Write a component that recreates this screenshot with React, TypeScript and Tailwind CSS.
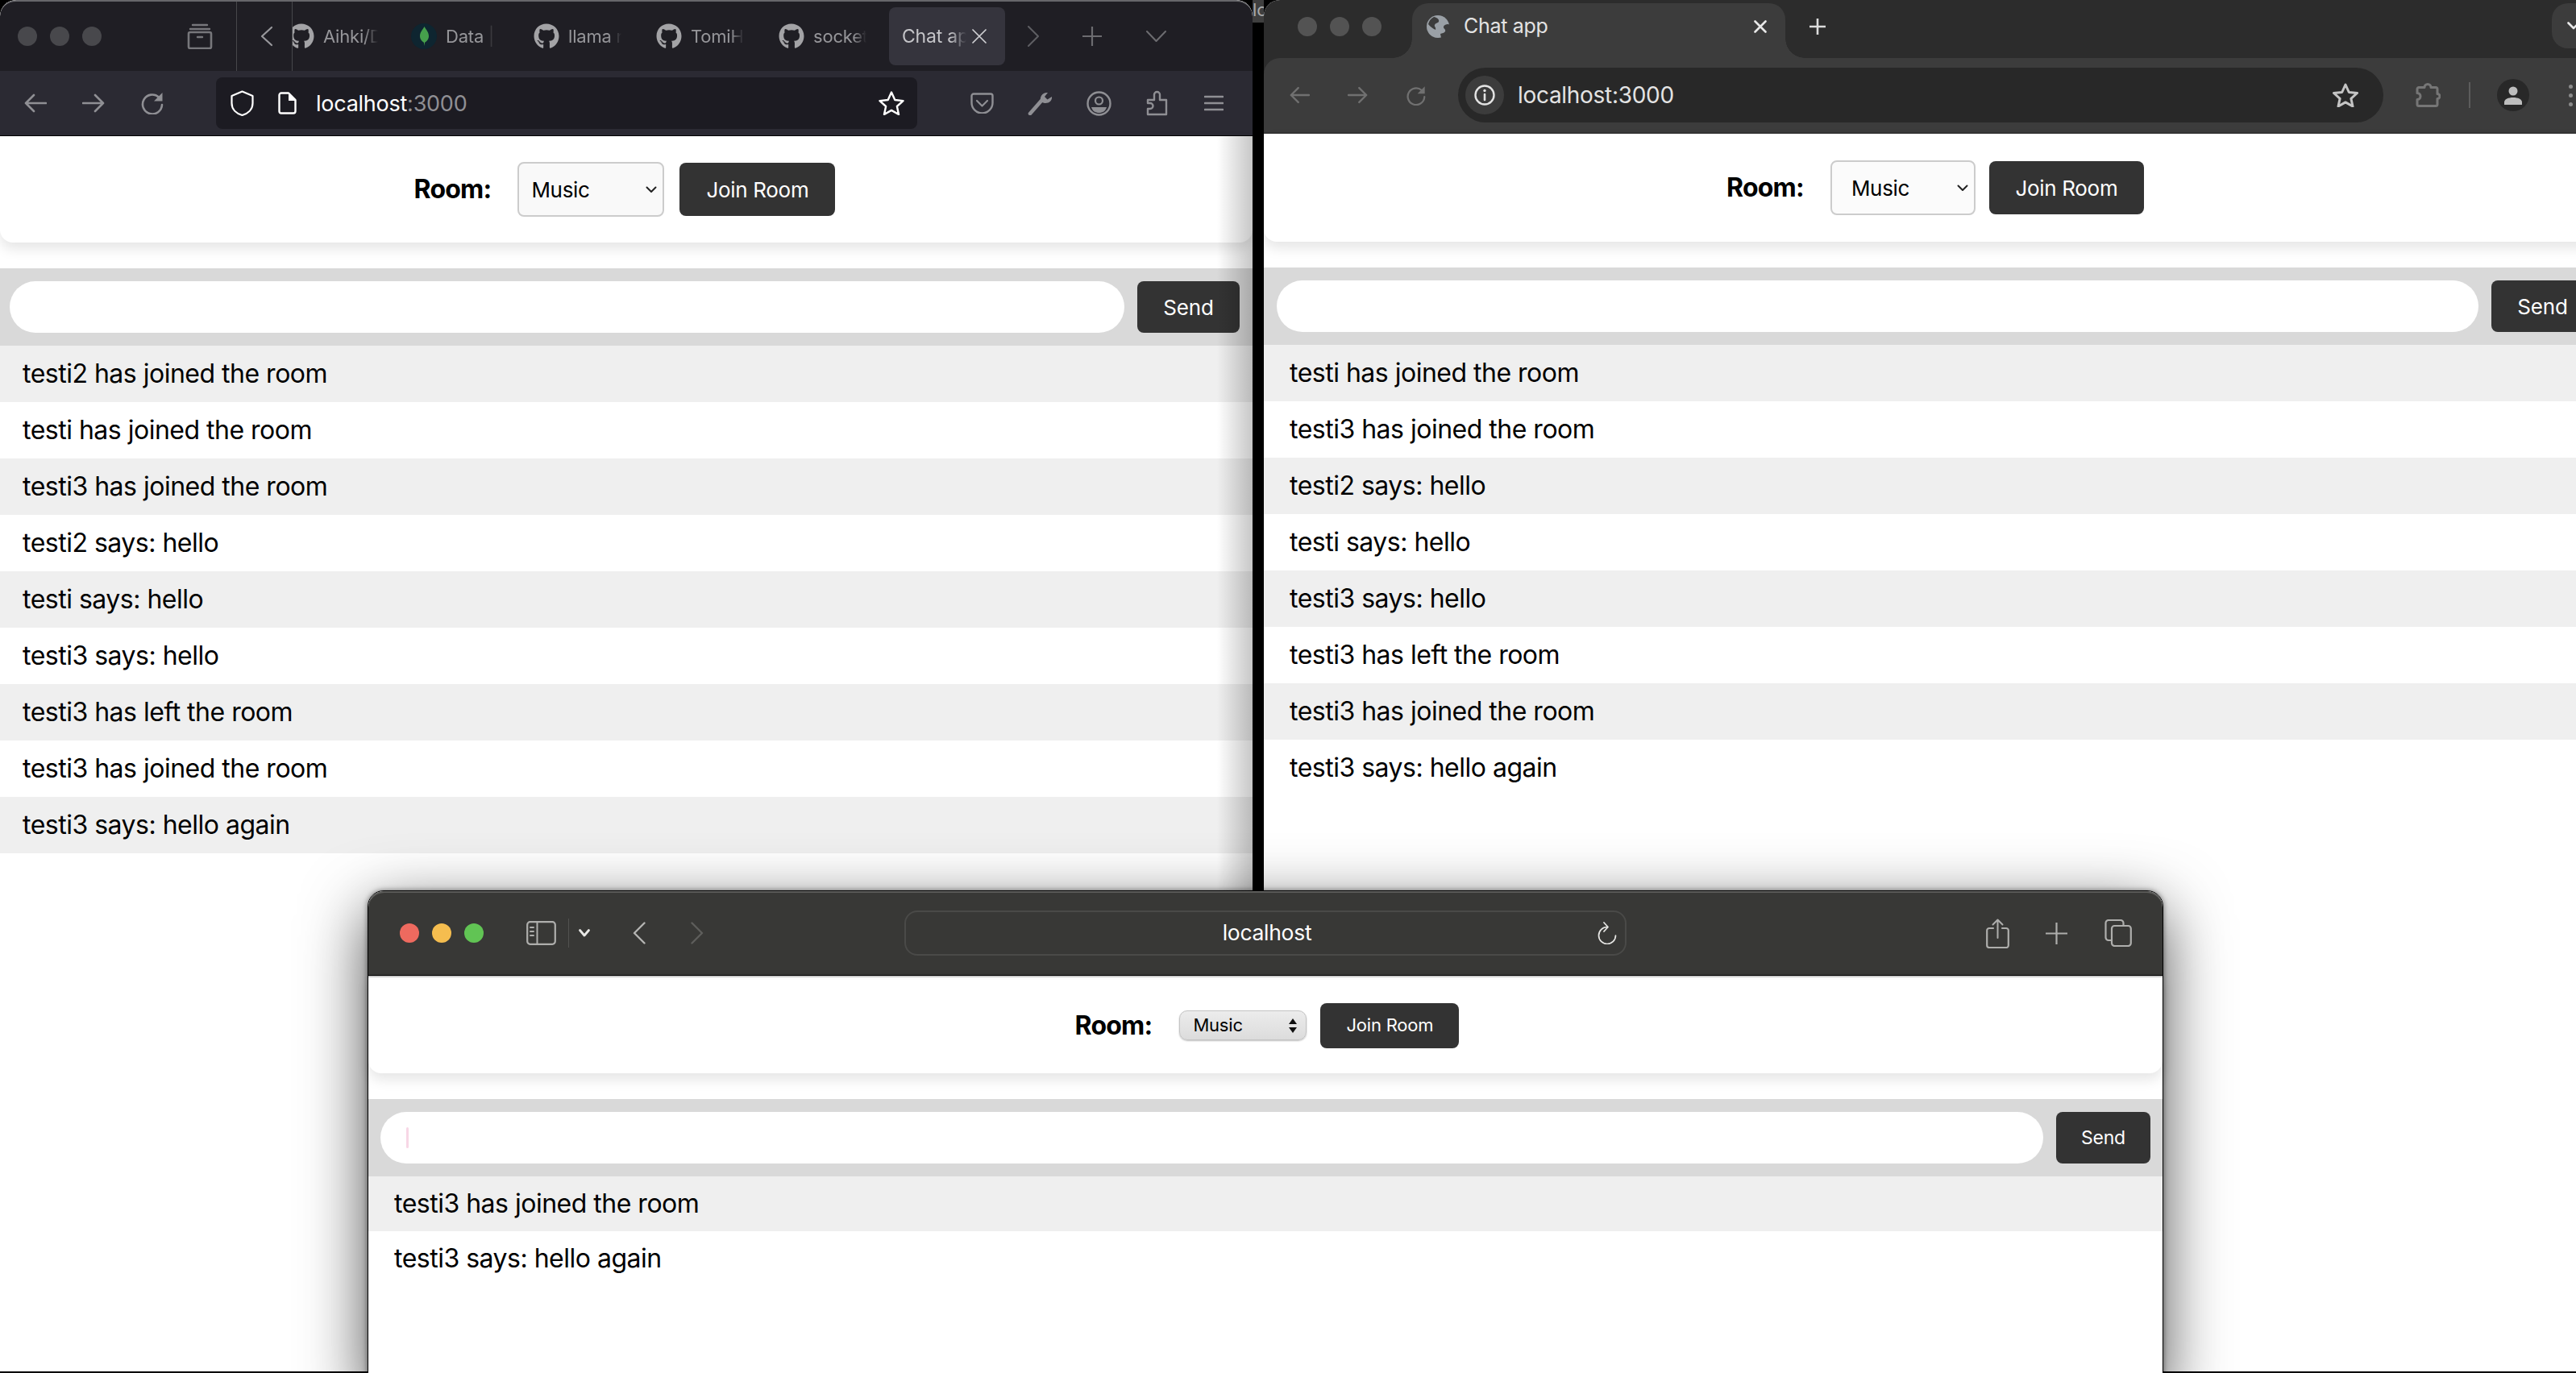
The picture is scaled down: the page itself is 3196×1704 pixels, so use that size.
import React from "react";
import { FaGithub } from "react-icons/fa";

const FONT = "[font-family:Inter,'Liberation_Sans',sans-serif]";

type SvgProps = { w: number; h: number; vw?: number; vh?: number; className?: string; children: React.ReactNode };
function Svg({ w, h, vw, vh, className, children }: SvgProps) {
  return (
    <svg width={w} height={h} viewBox={`0 0 ${vw ?? w} ${vh ?? h}`} fill="none" strokeLinecap="round" strokeLinejoin="round" className={`shrink-0 ${className ?? ""}`}>
      {children}
    </svg>
  );
}

function Dots({ color, gap }: { color: [string, string, string]; gap: string }) {
  return (
    <div className={`flex shrink-0 ${gap}`}>
      <span className={`h-6 w-6 rounded-full ${color[0]}`} />
      <span className={`h-6 w-6 rounded-full ${color[1]}`} />
      <span className={`h-6 w-6 rounded-full ${color[2]}`} />
    </div>
  );
}

function ArrowLeft({ w, h, color, sw = 2.6 }: { w: number; h: number; color: string; sw?: number }) {
  return (
    <Svg w={w} h={h} vw={28} vh={24}>
      <path d="M27 12H2M12 2 2 12l10 10" stroke={color} strokeWidth={sw} />
    </Svg>
  );
}
function ArrowRight({ w, h, color, sw = 2.6 }: { w: number; h: number; color: string; sw?: number }) {
  return (
    <Svg w={w} h={h} vw={28} vh={24}>
      <path d="M1 12h25M16 2l10 10-10 10" stroke={color} strokeWidth={sw} />
    </Svg>
  );
}
function Reload({ w, h, color }: { w: number; h: number; color: string }) {
  return (
    <Svg w={w} h={h} vw={29} vh={28}>
      <path d="M23 6.5A12 12 0 1 0 27 16" stroke={color} strokeWidth={2.6} />
      <path d="M27.5 1v10.5H17z" fill={color} />
    </Svg>
  );
}

function Mongo() {
  return (
    <span className="flex h-8 w-8 shrink-0 items-center justify-center rounded-full bg-[#0e2530]">
      <Svg w={11} h={24} vw={12} vh={26}>
        <path d="M6 0C9 5 12 8 12 13c0 4-3 7-5.400 8.500L6 26l-.6-4.500C3 20 0 17 0 13 0 8 3 5 6 0z" fill="#46a04c" />
      </Svg>
    </span>
  );
}

function FxTab({ icon, label, width, textWidth }: { icon: React.ReactNode; label: string; width: string; textWidth: string }) {
  return (
    <div className={`flex shrink-0 items-center gap-[11px] ${width}`}>
      {icon}
      <span className={`overflow-hidden whitespace-nowrap text-[22px] tracking-[-0.2px] text-[#96969a] [mask-image:linear-gradient(to_right,black_75%,transparent)] ${textWidth}`}>{label}</span>
    </div>
  );
}

function FirefoxChrome() {
  const gh = <FaGithub size={32} className="shrink-0 text-[#a3a3a6]" />;
  return (
    <>
      <div className="flex h-[88px] shrink-0 items-stretch rounded-t-[20px] border-t-2 border-[#66666a] bg-[#1f1e24]">
        <div className="flex w-[293px] shrink-0 items-center pl-[22px]">
          <Dots color={["bg-[#48484c]", "bg-[#48484c]", "bg-[#48484c]"]} gap="gap-4" />
          <div className="ml-[106px]">
            <Svg w={32} h={32}>
              <path d="M7 2h18M4 7h24" stroke="#77777b" strokeWidth={2.4} />
              <rect x="2" y="11" width="28" height="20" rx="2" stroke="#77777b" strokeWidth={2.6} />
              <path d="M13 17h6" stroke="#77777b" strokeWidth={2.4} />
            </Svg>
          </div>
        </div>
        <div className="flex w-[69px] shrink-0 items-center border-l border-[#47474b] pl-[29px]">
          <Svg w={16} h={26}>
            <path d="M14 2 2 13l12 11" stroke="#98989c" strokeWidth={2.2} />
          </Svg>
        </div>
        <div className="flex min-w-0 flex-1 items-center overflow-hidden border-l border-[#47474b]">
          <div className="ml-[-5px] flex shrink-0 items-center">
            <FxTab icon={gh} label="Aihki/Dashboard" width="w-[152px]" textWidth="w-[68px]" />
            <FxTab icon={<Mongo />} label="Data | MongoDB" width="w-[152px]" textWidth="w-[60px]" />
            <FxTab icon={gh} label="llama runner" width="w-[152px]" textWidth="w-[66px]" />
            <FxTab icon={gh} label="TomiHe repo" width="w-[152px]" textWidth="w-[66px]" />
            <FxTab icon={gh} label="socket.io chat" width="w-[137px]" textWidth="w-[66px]" />
            <div className="flex h-[72px] w-[144px] shrink-0 items-center rounded-lg bg-[#35343d] pl-4">
              <span className="w-[80px] overflow-hidden whitespace-nowrap text-[23px] tracking-[-0.2px] text-[#c4c4c8] [mask-image:linear-gradient(to_right,black_75%,transparent)]">Chat app</span>
              <Svg w={18} h={18} className="ml-[7px]">
                <path d="M1 1l16 16M17 1 1 17" stroke="#d0d0d4" strokeWidth={1.7} />
              </Svg>
            </div>
            <div className="ml-[28px]">
              <Svg w={14} h={26}>
                <path d="M1 1l12 12L1 25" stroke="#5e5e63" strokeWidth={2} />
              </Svg>
            </div>
            <div className="ml-[54px]">
              <Svg w={24} h={24}>
                <path d="M12 0v24M0 12h24" stroke="#6c6c70" strokeWidth={2.2} />
              </Svg>
            </div>
            <div className="ml-[55px]">
              <Svg w={25} h={14}>
                <path d="M1 1l11.500 12L24 1" stroke="#6c6c70" strokeWidth={2} />
              </Svg>
            </div>
          </div>
        </div>
      </div>
      <div className="flex h-[81px] shrink-0 items-center border-b border-black bg-[#2b2a33] pl-[30px]">
        <ArrowLeft w={28} h={24} color="#8f8f94" />
        <div className="ml-[44px]">
          <ArrowRight w={28} h={24} color="#8f8f94" />
        </div>
        <div className="ml-[44px]">
          <Reload w={29} h={28} color="#8f8f94" />
        </div>
        <div className="ml-[65px] flex h-16 w-[870px] shrink-0 items-center rounded-lg bg-[#1c1b22] pl-[18px] pr-4">
          <Svg w={29} h={32}>
            <path d="M14.500 1.500 27.500 7v9c0 8-6 13-13 15C7.500 29 1.500 24 1.500 16V7z" stroke="#fff" strokeWidth={2.2} />
          </Svg>
          <div className="ml-[30px]">
            <Svg w={23} h={28}>
              <path d="M4 1.500h9L21.500 10v14a2.500 2.500 0 0 1-2.500 2.500H4A2.500 2.500 0 0 1 1.500 24V4A2.500 2.500 0 0 1 4 1.500z" stroke="#fff" strokeWidth={2.4} />
              <path d="M13 1.500h1L22 10v1h-9z" fill="#fff" />
            </Svg>
          </div>
          <span className="ml-[24px] flex-1 pt-[2px] text-[27px] tracking-[-0.25px]">
            <span className="text-white">localhost</span>
            <span className="text-[#8f8f94]">:3000</span>
          </span>
          <Svg w={32} h={30}>
            <path d="M16 1.500 20.300 11l10.200 1.100-7.600 6.900 2.100 10-9-5.100-9 5.100 2.100-10-7.600-6.900L11.700 11z" stroke="#fff" strokeWidth={2.4} />
          </Svg>
        </div>
        <div className="ml-[66px]">
          <Svg w={29} h={26}>
            <path d="M4 1.500h21A2.500 2.500 0 0 1 27.500 4v8.500a13 13 0 0 1-26 0V4A2.500 2.500 0 0 1 4 1.500z" stroke="#8f8f94" strokeWidth={2.4} />
            <path d="M8 10l6.500 6.500L21 10" stroke="#8f8f94" strokeWidth={2.2} />
          </Svg>
        </div>
        <div className="ml-[42px]">
          <Svg w={31} h={29}>
            <path d="M3 27 17 11" stroke="#8f8f94" strokeWidth={4.600} />
            <path d="M16.500 12C14 6 19 0 25 1l-4 5 3.500 3.500L30 6c1 6-7 11-13.500 6z" fill="#8f8f94" />
          </Svg>
        </div>
        <div className="ml-[42px]">
          <Svg w={31} h={31}>
            <circle cx="15.500" cy="15.500" r="14" stroke="#8f8f94" strokeWidth={2.4} />
            <circle cx="15.500" cy="12" r="4.500" stroke="#8f8f94" strokeWidth={2.2} />
            <path d="M6 20h19c-1.500 5-5 7-9.500 7S7.500 25 6 20z" fill="#8f8f94" />
          </Svg>
        </div>
        <div className="ml-[42px]">
          <Svg w={28} h={32}>
            <path d="M3 12h8V5.500a3.500 3.500 0 0 1 7 0V12h8v18H3v-7h3a3.500 3.500 0 0 0 0-7H3z" stroke="#8f8f94" strokeWidth={2.4} />
          </Svg>
        </div>
        <div className="ml-[45px]">
          <Svg w={24} h={20}>
            <path d="M1 2h22M1 10h22M1 18h22" stroke="#8f8f94" strokeWidth={2.6} />
          </Svg>
        </div>
      </div>
    </>
  );
}

function ChromeTabStrip() {
  return (
    <div className="flex h-[72px] shrink-0 items-end bg-[#2c2c2c] pl-[42px]">
      <div className="mb-[27px]">
        <Dots color={["bg-[#535353]", "bg-[#535353]", "bg-[#535353]"]} gap="gap-4" />
      </div>
      <div className="relative ml-[38px] flex h-[68px] w-[463px] shrink-0 items-center rounded-t-[20px] bg-[#3c3c3c] pb-[10px] pl-[18px]">
        <span className="absolute bottom-0 left-[-24px] h-6 w-6 bg-[radial-gradient(circle_at_0_0,transparent_23.500px,#3c3c3c_24px)]" />
        <span className="absolute bottom-0 right-[-24px] h-6 w-6 bg-[radial-gradient(circle_at_100%_0,transparent_23.500px,#3c3c3c_24px)]" />
        <Svg w={28} h={28}>
          <circle cx="14" cy="14" r="14" fill="#9aa0a6" />
          <path d="M9 2c4 1 7 3 6 6-1 2-4 1-5 4-1 2 2 3 1 6-2-1-6-3-9-7 1-4 3-7 7-9zM27 11c-3 0-6 1-6 4 0 2 3 2 2 5-1 2-4 2-6 3l1 5c6 0 12-5 12-12 0-2-1-4-3-5z" fill="#3c3c3c" />
        </Svg>
        <span className="ml-[18px] flex-1 text-[25px] tracking-[-0.3px] text-[#e3e3e3]">Chat app</span>
        <div className="mr-[23px]">
          <Svg w={16} h={16}>
            <path d="M1.500 1.500l13 13M14.500 1.500l-13 13" stroke="#e8e8e8" strokeWidth={2.600} />
          </Svg>
        </div>
      </div>
      <div className="mb-[29px] ml-[30px]">
        <Svg w={20} h={20}>
          <path d="M10 0v20M0 10h20" stroke="#dcdcdc" strokeWidth={2.600} strokeLinecap="butt" />
        </Svg>
      </div>
      <div className="mb-3 ml-auto mr-2 flex h-14 w-[60px] items-center rounded-[20px] bg-[#3c3c3c] pl-[19px]">
        <Svg w={16} h={10}>
          <path d="M1.500 1.500 8 8l6.500-6.500" stroke="#e8e8e8" strokeWidth={2.600} />
        </Svg>
      </div>
    </div>
  );
}

function ChromeToolbar() {
  return (
    <div className="shrink-0 bg-[#2c2c2c]">
      <div className="flex h-[94px] items-center rounded-tl-[20px] border-b-2 border-[#343434] bg-[#3c3c3c] pl-8">
        <ArrowLeft w={25} h={22} color="#707070" />
        <div className="ml-[47px]">
          <ArrowRight w={25} h={22} color="#707070" />
        </div>
        <div className="ml-[47px]">
          <Reload w={25} h={25} color="#707070" />
        </div>
        <div className="ml-[40px] flex h-[68px] w-[1148px] shrink-0 items-center rounded-full bg-[#282828] pl-[9px] pr-[31px]">
          <span className="flex h-12 w-12 shrink-0 items-center justify-center rounded-full bg-[#3c3c3c]">
            <Svg w={26} h={26}>
              <circle cx="13" cy="13" r="11.500" stroke="#e3e3e3" strokeWidth={2.400} />
              <path d="M13 12v7" stroke="#e3e3e3" strokeWidth={2.600} />
              <circle cx="13" cy="7.500" r="1.700" fill="#e3e3e3" />
            </Svg>
          </span>
          <span className="ml-[17px] flex-1 text-[28px] tracking-[-0.3px] text-[#e3e3e3]">localhost:3000</span>
          <Svg w={32} h={30}>
            <path d="M16 2 20.300 11.500l10.200 1-7.600 6.900 2.100 9.600-9-5.100-9 5.100 2.100-9.600-7.600-6.900 10.200-1z" stroke="#c4c4c4" strokeWidth={3} />
          </Svg>
        </div>
        <div className="ml-[39px]">
          <Svg w={32} h={32}>
            <path d="M5 6.500h7a4 4 0 0 1 8 0h6a2 2 0 0 1 2 2v6a3 3 0 0 1 0 6v7a2 2 0 0 1-2 2H5a2 2 0 0 1-2-2v-6a3.500 3.500 0 0 0 0-8v-5a2 2 0 0 1 2-2z" stroke="#767676" strokeWidth={3} />
          </Svg>
        </div>
        <span className="ml-[35px] h-8 w-[2px] shrink-0 bg-[#5c5c5c]" />
        <span className="ml-[33px] flex h-10 w-10 shrink-0 items-center justify-center rounded-full bg-[#282828]">
          <Svg w={24} h={24}>
            <circle cx="12" cy="7" r="5.500" fill="#bdbdbd" />
            <path d="M1 24v-3c0-4 5-6 11-6s11 2 11 6v3z" fill="#bdbdbd" />
          </Svg>
        </span>
        <div className="ml-[49px] flex shrink-0 flex-col gap-[6px]">
          <span className="h-[5px] w-[5px] rounded-full bg-[#8a8a8a]" />
          <span className="h-[5px] w-[5px] rounded-full bg-[#8a8a8a]" />
          <span className="h-[5px] w-[5px] rounded-full bg-[#8a8a8a]" />
        </div>
      </div>
    </div>
  );
}

function SafariToolbar() {
  return (
    <div className="flex h-[105px] shrink-0 items-center rounded-t-[20px] border-b border-black bg-[#383836] pl-[39px] shadow-[inset_0_2px_0_#5c5c5a]">
      <Dots color={["bg-[#ee6a5f]", "bg-[#f5bd4f]", "bg-[#61c454]"]} gap="gap-[16px]" />
      <div className="ml-[53px]">
        <Svg w={37} h={30}>
          <rect x="1.200" y="1.200" width="34.600" height="27.600" rx="3.500" stroke="#aeaeac" strokeWidth={2.200} />
          <path d="M13.500 1.500v27" stroke="#aeaeac" strokeWidth={2} />
          <path d="M5 8h4M5 13h4M5 18h4" stroke="#aeaeac" strokeWidth={2} />
        </Svg>
      </div>
      <span className="ml-[15px] h-9 w-px shrink-0 bg-[#525250]" />
      <div className="ml-[11px]">
        <Svg w={16} h={12}>
          <path d="M2.500 2.500 8 9l5.500-6.500" stroke="#e8e8e6" strokeWidth={2.800} />
        </Svg>
      </div>
      <div className="ml-[52px]">
        <Svg w={16} h={28}>
          <path d="M14.500 1.500 2 14l12.500 12.500" stroke="#b4b4b2" strokeWidth={2.400} />
        </Svg>
      </div>
      <div className="ml-[56px]">
        <Svg w={16} h={28}>
          <path d="M1.500 1.500 14 14 1.500 26.500" stroke="#5e5e5c" strokeWidth={2.400} />
        </Svg>
      </div>
      <div className="ml-[249px] grid h-[56px] w-[896px] shrink-0 grid-cols-[1fr_auto_1fr] items-center rounded-2xl border-2 border-[#4a4a48] pl-[14px] pr-[10px]">
        <span />
        <span className="text-[26.500px] tracking-[-0.3px] text-white">localhost</span>
        <span className="justify-self-end">
          <Svg w={24} h={28}>
            <path d="M12 6.500A10.500 10.500 0 1 0 22.500 17" stroke="#e6e6e4" strokeWidth={1.700} />
            <path d="M8 1l5 5.500L8 12" stroke="#e6e6e4" strokeWidth={1.700} />
          </Svg>
        </span>
      </div>
      <div className="ml-[446px]">
        <Svg w={29} h={37}>
          <path d="M14.500 24V2M8.500 7.500l6-6 6 6" stroke="#aeaeac" strokeWidth={2} />
          <path d="M9 12H4a2.800 2.800 0 0 0-2.800 2.800v18.400A2.800 2.800 0 0 0 4 36h21a2.800 2.800 0 0 0 2.800-2.800V14.800A2.800 2.800 0 0 0 25 12h-5" stroke="#aeaeac" strokeWidth={2.200} />
        </Svg>
      </div>
      <div className="ml-[45px]">
        <Svg w={27} h={27}>
          <path d="M13.500 0v27M0 13.500h27" stroke="#aeaeac" strokeWidth={2.200} />
        </Svg>
      </div>
      <div className="ml-[46px]">
        <Svg w={34} h={34}>
          <path d="M8 26H5a3.500 3.500 0 0 1-3.500-3.500v-18A3.500 3.500 0 0 1 5 1h15a3.500 3.500 0 0 1 3.500 3.500V7" stroke="#aeaeac" strokeWidth={2.200} />
          <rect x="9" y="8" width="23.800" height="25" rx="3.500" stroke="#aeaeac" strokeWidth={2.200} />
        </Svg>
      </div>
    </div>
  );
}

type ChatProps = {
  card: string;
  gaps: { label: string; button: string };
  select: string;
  chevron: React.ReactNode;
  selectText: string;
  join: string;
  bar: string;
  send: string;
  row: string;
  caret?: boolean;
  messages: string[];
};

function ChatPage({ card, gaps, select, chevron, selectText, join, bar, send, row, caret, messages }: ChatProps) {
  return (
    <div className="min-h-0 flex-1 bg-white">
      <div className={`flex items-center justify-center rounded-b-2xl bg-white shadow-[0_8px_16px_rgba(0,0,0,0.1)] ${card}`}>
        <label className="text-[32px] font-bold tracking-[-0.8px] text-black">Room:</label>
        <div className={`relative ${gaps.label}`}>
          <select className={`block appearance-none text-black outline-none ${select} ${selectText}`} defaultValue="Music">
            <option>Music</option>
          </select>
          {chevron}
        </div>
        <button className={`rounded-lg bg-[#333333] text-white ${gaps.button} ${join}`}>Join Room</button>
      </div>
      <div className={`mt-8 flex h-24 items-center gap-4 bg-[#d9d9d9] ${bar}`}>
        <div className="relative h-16 min-w-0 flex-1">
          <input className="block h-16 w-full rounded-full bg-white outline-none" aria-label="Message" />
          {caret && <span className="absolute left-[32px] top-[19px] h-[26px] w-[3px] rounded-sm bg-[#f8d7e6]" />}
        </div>
        <button className={`h-16 shrink-0 rounded-lg bg-[#333333] text-white ${send}`}>Send</button>
      </div>
      <ul>
        {messages.map((m, i) => (
          <li key={i} className={`flex items-center text-[32px] tracking-[-0.5px] text-black ${row} ${i % 2 === 0 ? "bg-[#efefef]" : "bg-white"}`}>
            {m}
          </li>
        ))}
      </ul>
    </div>
  );
}

const FxChevron = (
  <span className="pointer-events-none absolute right-[9px] top-[30px]">
    <Svg w={14} h={9}>
      <path d="M1.500 1.500 7 7l5.500-5.500" stroke="#222" strokeWidth={2} />
    </Svg>
  </span>
);
const SafariChevron = (
  <span className="pointer-events-none absolute right-[11px] top-[9px]">
    <Svg w={12} h={20}>
      <path d="M6 1l5 7H1zM6 19l5-7H1z" fill="#111" />
    </Svg>
  </span>
);

export default function App() {
  return (
    <div className={`relative flex h-[1704px] w-[3196px] items-start gap-[14px] overflow-hidden bg-black ${FONT}`}>
      <section className="flex h-[1702px] w-[1554px] shrink-0 flex-col overflow-hidden rounded-t-[20px] bg-white">
        <FirefoxChrome />
        <ChatPage
          card="h-[132px] pr-1"
          gaps={{ label: "ml-[33px]", button: "ml-[19px]" }}
          select="h-[68px] w-[182px] rounded-lg border-2 border-[#cccccc] bg-[#f9f9f9] pl-[15px]"
          chevron={FxChevron}
          selectText="text-[26px] tracking-[-0.3px]"
          join="h-[66px] w-[193px] text-[26px] tracking-[-0.3px]"
          bar="pl-3 pr-4"
          send="w-[127px] text-[26px] tracking-[-0.2px]"
          row="h-[70px] pl-7"
          messages={[
            "testi2 has joined the room",
            "testi has joined the room",
            "testi3 has joined the room",
            "testi2 says: hello",
            "testi says: hello",
            "testi3 says: hello",
            "testi3 has left the room",
            "testi3 has joined the room",
            "testi3 says: hello again",
          ]}
        />
      </section>
      <section className="relative z-10 flex h-[1702px] w-[1666px] shrink-0 flex-col overflow-hidden rounded-tl-[20px] bg-white">
        <ChromeTabStrip />
        <ChromeToolbar />
        <ChatPage
          card="h-[134px]"
          gaps={{ label: "ml-[33px]", button: "ml-[17px]" }}
          select="h-[68px] w-[180px] rounded-lg border-2 border-[#cccccc] bg-[#fbfbfb] pl-[24px]"
          chevron={FxChevron}
          selectText="text-[26px] tracking-[-0.3px]"
          join="h-[66px] w-[192px] text-[26px] tracking-[-0.3px]"
          bar="pl-4 pr-4"
          send="w-[127px] text-[26px] tracking-[-0.2px]"
          row="h-[70px] pl-8"
          messages={[
            "testi has joined the room",
            "testi3 has joined the room",
            "testi2 says: hello",
            "testi says: hello",
            "testi3 says: hello",
            "testi3 has left the room",
            "testi3 has joined the room",
            "testi3 says: hello again",
          ]}
        />
      </section>
      {/* window-edge shadow cast over the left browser */}
      <span className="pointer-events-none absolute left-[1510px] top-[168px] z-0 h-[940px] w-[44px] bg-gradient-to-r from-transparent to-[rgba(0,0,0,0.22)]" />
      <div className="absolute left-[1554px] top-0 z-0 h-[28px] w-[14px] overflow-hidden bg-[#3f3f3f] text-[22px] leading-[24px] text-[#a8a8a8]">lo</div>
      <section className="absolute left-[456px] top-[1105px] z-20 flex h-[620px] w-[2228px] flex-col rounded-t-[20px] border border-black bg-white shadow-[0_0_6px_rgba(0,0,0,0.5),0_24px_80px_rgba(0,0,0,0.7)]">
        <SafariToolbar />
        <div className="h-[2px] shrink-0 bg-[#cfcfcf]" />
        <ChatPage
          card="h-[119px] pl-1"
          gaps={{ label: "ml-[34px]", button: "ml-[17px]" }}
          select="h-[37px] w-[158px] rounded-[10px] border border-[#c4c4c4] bg-gradient-to-b from-[#ececec] to-[#dcdcdc] pl-4 shadow-[0_1px_2px_rgba(0,0,0,0.25)]"
          chevron={SafariChevron}
          selectText="text-[22px] tracking-[-0.2px]"
          join="h-[56px] w-[172px] text-[22px] tracking-[-0.2px]"
          bar="pl-[15px] pr-[15px]"
          send="w-[117px] text-[23px] tracking-[-0.2px]"
          row="h-[68px] pl-8"
          caret
          messages={["testi3 has joined the room", "testi3 says: hello again"]}
        />
      </section>
    </div>
  );
}
